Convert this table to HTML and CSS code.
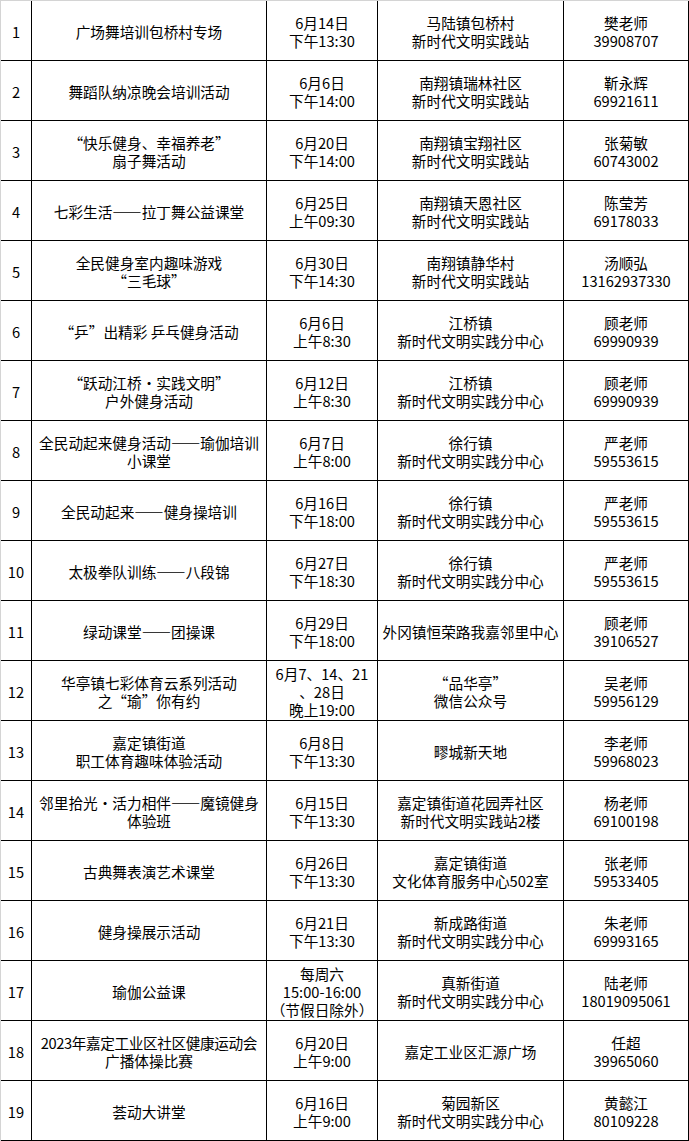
FILE: index.html
```html
<!DOCTYPE html>
<html lang="zh-CN">
<head>
<meta charset="utf-8">
<title>活动安排</title>
<link rel="stylesheet" href="styles.css">
</head>
<body>
<div class="sheet">
  <div class="c">1</div><div class="c"><span>广场舞培训包桥村专场</span></div><div class="c"><span>6月14日</span><span>下午13:30</span></div><div class="c"><span>马陆镇包桥村</span><span>新时代文明实践站</span></div><div class="c"><span>樊老师</span><span>39908707</span></div>
  <div class="c">2</div><div class="c"><span>舞蹈队纳凉晚会培训活动</span></div><div class="c"><span>6月6日</span><span>下午14:00</span></div><div class="c"><span>南翔镇瑞林社区</span><span>新时代文明实践站</span></div><div class="c"><span>靳永辉</span><span>69921611</span></div>
  <div class="c">3</div><div class="c"><span>“快乐健身、幸福养老”</span><span>扇子舞活动</span></div><div class="c"><span>6月20日</span><span>下午14:00</span></div><div class="c"><span>南翔镇宝翔社区</span><span>新时代文明实践站</span></div><div class="c"><span>张菊敏</span><span>60743002</span></div>
  <div class="c">4</div><div class="c"><span>七彩生活——拉丁舞公益课堂</span></div><div class="c"><span>6月25日</span><span>上午09:30</span></div><div class="c"><span>南翔镇天恩社区</span><span>新时代文明实践站</span></div><div class="c"><span>陈莹芳</span><span>69178033</span></div>
  <div class="c">5</div><div class="c"><span>全民健身室内趣味游戏</span><span>“三毛球”</span></div><div class="c"><span>6月30日</span><span>下午14:30</span></div><div class="c"><span>南翔镇静华村</span><span>新时代文明实践站</span></div><div class="c"><span>汤顺弘</span><span>13162937330</span></div>
  <div class="c">6</div><div class="c"><span>“乒”出精彩 乒乓健身活动</span></div><div class="c"><span>6月6日</span><span>上午8:30</span></div><div class="c"><span>江桥镇</span><span>新时代文明实践分中心</span></div><div class="c"><span>顾老师</span><span>69990939</span></div>
  <div class="c">7</div><div class="c"><span>“跃动江桥·实践文明”</span><span>户外健身活动</span></div><div class="c"><span>6月12日</span><span>上午8:30</span></div><div class="c"><span>江桥镇</span><span>新时代文明实践分中心</span></div><div class="c"><span>顾老师</span><span>69990939</span></div>
  <div class="c">8</div><div class="c"><span>全民动起来健身活动——瑜伽培训</span><span>小课堂</span></div><div class="c"><span>6月7日</span><span>上午8:00</span></div><div class="c"><span>徐行镇</span><span>新时代文明实践分中心</span></div><div class="c"><span>严老师</span><span>59553615</span></div>
  <div class="c">9</div><div class="c"><span>全民动起来——健身操培训</span></div><div class="c"><span>6月16日</span><span>下午18:00</span></div><div class="c"><span>徐行镇</span><span>新时代文明实践分中心</span></div><div class="c"><span>严老师</span><span>59553615</span></div>
  <div class="c">10</div><div class="c"><span>太极拳队训练——八段锦</span></div><div class="c"><span>6月27日</span><span>下午18:30</span></div><div class="c"><span>徐行镇</span><span>新时代文明实践分中心</span></div><div class="c"><span>严老师</span><span>59553615</span></div>
  <div class="c">11</div><div class="c"><span>绿动课堂——团操课</span></div><div class="c"><span>6月29日</span><span>下午18:00</span></div><div class="c"><span>外冈镇恒荣路我嘉邻里中心</span></div><div class="c"><span>顾老师</span><span>39106527</span></div>
  <div class="c">12</div><div class="c"><span>华亭镇七彩体育云系列活动</span><span>之“瑜”你有约</span></div><div class="c"><span>6月7、14、21</span><span>、28日</span><span>晚上19:00</span></div><div class="c"><span>“品华亭”</span><span>微信公众号</span></div><div class="c"><span>吴老师</span><span>59956129</span></div>
  <div class="c">13</div><div class="c"><span>嘉定镇街道</span><span>职工体育趣味体验活动</span></div><div class="c"><span>6月8日</span><span>下午13:30</span></div><div class="c"><span>疁城新天地</span></div><div class="c"><span>李老师</span><span>59968023</span></div>
  <div class="c">14</div><div class="c"><span>邻里拾光·活力相伴——魔镜健身</span><span>体验班</span></div><div class="c"><span>6月15日</span><span>下午13:30</span></div><div class="c"><span>嘉定镇街道花园弄社区</span><span>新时代文明实践站2楼</span></div><div class="c"><span>杨老师</span><span>69100198</span></div>
  <div class="c">15</div><div class="c"><span>古典舞表演艺术课堂</span></div><div class="c"><span>6月26日</span><span>下午13:30</span></div><div class="c"><span>嘉定镇街道</span><span>文化体育服务中心502室</span></div><div class="c"><span>张老师</span><span>59533405</span></div>
  <div class="c">16</div><div class="c"><span>健身操展示活动</span></div><div class="c"><span>6月21日</span><span>下午13:30</span></div><div class="c"><span>新成路街道</span><span>新时代文明实践分中心</span></div><div class="c"><span>朱老师</span><span>69993165</span></div>
  <div class="c">17</div><div class="c"><span>瑜伽公益课</span></div><div class="c"><span>每周六</span><span>15:00-16:00</span><span>（节假日除外）</span></div><div class="c"><span>真新街道</span><span>新时代文明实践分中心</span></div><div class="c"><span>陆老师</span><span>18019095061</span></div>
  <div class="c">18</div><div class="c"><span class="tight">2023年嘉定工业区社区健康运动会</span><span>广播体操比赛</span></div><div class="c"><span>6月20日</span><span>上午9:00</span></div><div class="c"><span>嘉定工业区汇源广场</span></div><div class="c"><span>任超</span><span>39965060</span></div>
  <div class="c">19</div><div class="c"><span>荟动大讲堂</span></div><div class="c"><span>6月16日</span><span>上午9:00</span></div><div class="c"><span>菊园新区</span><span>新时代文明实践分中心</span></div><div class="c"><span>黄懿江</span><span>80109228</span></div>
</div>
</body>
</html>
```

FILE: styles.css
```css
html, body {
  margin: 0;
  padding: 0;
  background: #ffffff;
}

body {
  font-family: "Noto Sans CJK SC", "Noto Sans", sans-serif;
  font-size: 14.67px;
  font-weight: 400;
  color: #000000;
  line-height: 18px;
}

.sheet {
  display: grid;
  grid-template-columns: 31px 235px 111px 186px 125px;
  grid-auto-rows: 60px;
  width: 688px;
  border-top: 1px solid #d4d4d4;
  border-left: 1px solid #d4d4d4;
}

.c {
  box-sizing: border-box;
  border-right: 1px solid #000000;
  border-bottom: 1px solid #000000;
  display: flex;
  flex-direction: column;
  justify-content: center;
  align-items: center;
  padding-top: 3px;
  white-space: nowrap;
  text-align: center;
  overflow: visible;
}

.c span {
  display: block;
  height: 18px;
  overflow: visible;
}

.tight {
  letter-spacing: -0.4px;
}
```
